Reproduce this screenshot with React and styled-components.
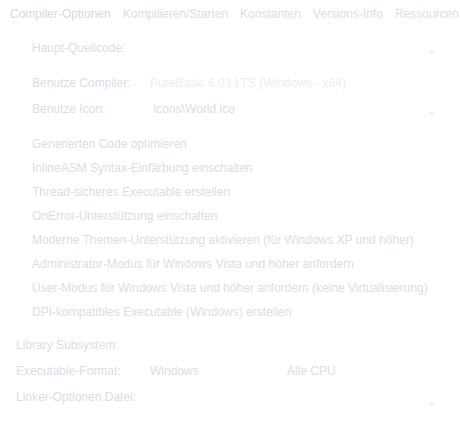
import React from 'react';
import styled, { createGlobalStyle } from 'styled-components';

const GlobalStyle = createGlobalStyle`
  html, body {
    margin: 0;
    padding: 0;
    background: #ffffff;
  }
  body {
    font-family: 'Liberation Sans', Arial, sans-serif;
    font-size: 12px;
    color: #dcdce6;
  }
`;

const Window = styled.div`
  width: 460px;
  height: 436px;
  display: flex;
  flex-direction: column;
  box-sizing: border-box;
`;

const Tabs = styled.div`
  display: flex;
  align-items: center;
  gap: 12px;
  padding: 5px 0 0 10px;
  height: 18px;
`;

const Tab = styled.span`
  color: ${(p) => (p.active ? '#d6d6e2' : '#dcdce6')};
  white-space: nowrap;
`;

const Panel = styled.div`
  display: flex;
  flex-direction: column;
  padding: 12px 0 0 0;
`;

const Row = styled.div`
  display: grid;
  grid-template-columns: ${(p) => p.cols || '1fr'};
  align-items: center;
  height: ${(p) => p.h || 24}px;
  padding-left: ${(p) => (p.indent ? 32 : 16)}px;
  padding-right: 26px;
  margin-top: ${(p) => p.mt || 0}px;
  white-space: nowrap;
`;

const Value = styled.span`
  color: ${(p) => (p.disabled ? '#ececf2' : '#dcdce6')};
`;

const Dots = styled.span`
  justify-self: end;
  color: #f0c8b0;
  font-size: 10px;
  letter-spacing: -1px;
  transform: translateY(${(p) => p.dy || 1}px);
`;

const Spacer = styled.div`
  height: ${(p) => p.h}px;
`;

const Option = styled.div`
  height: 24px;
  display: flex;
  align-items: center;
  padding-left: 32px;
  white-space: nowrap;
`;

const options = [
  'Generierten Code optimieren',
  'InlineASM Syntax-Einfärbung einschalten',
  'Thread-sicheres Executable erstellen',
  'OnError-Unterstützung einschalten',
  'Moderne Themen-Unterstützung aktivieren (für Windows XP und höher)',
  'Administrator-Modus für Windows Vista und höher anfordern',
  'User-Modus für Windows Vista und höher anfordern (keine Virtualisierung)',
  'DPI-kompatibles Executable (Windows) erstellen',
];

export default function App() {
  return (
    <Window>
      <GlobalStyle />
      <Tabs>
        <Tab active>Compiler-Optionen</Tab>
        <Tab>Kompilieren/Starten</Tab>
        <Tab>Konstanten</Tab>
        <Tab>Versions-Info</Tab>
        <Tab>Ressourcen</Tab>
      </Tabs>
      <Panel>
        <Row indent cols="1fr auto" h={26}>
          <span>Haupt-Quellcode:</span>
          <Dots>...</Dots>
        </Row>
        <Row indent cols="118px 1fr" mt={10}>
          <span>Benutze Compiler:</span>
          <Value disabled>PureBasic 6.03 LTS (Windows - x64)</Value>
        </Row>
        <Row indent cols="121px 1fr auto" h={28}>
          <span>Benutze Icon:</span>
          <Value>Icons\World.ico</Value>
          <Dots>...</Dots>
        </Row>
        <Spacer h={9} />
        {options.map((o) => (
          <Option key={o}>{o}</Option>
        ))}
        <Row cols="1fr" mt={8} h={26}>
          <span>Library Subsystem:</span>
        </Row>
        <Row cols="134px 137px 1fr" h={26}>
          <span>Executable-Format:</span>
          <Value>Windows</Value>
          <Value>Alle CPU</Value>
        </Row>
        <Row cols="1fr auto" h={26}>
          <span>Linker-Optionen Datei:</span>
          <Dots dy={4}>...</Dots>
        </Row>
      </Panel>
    </Window>
  );
}
